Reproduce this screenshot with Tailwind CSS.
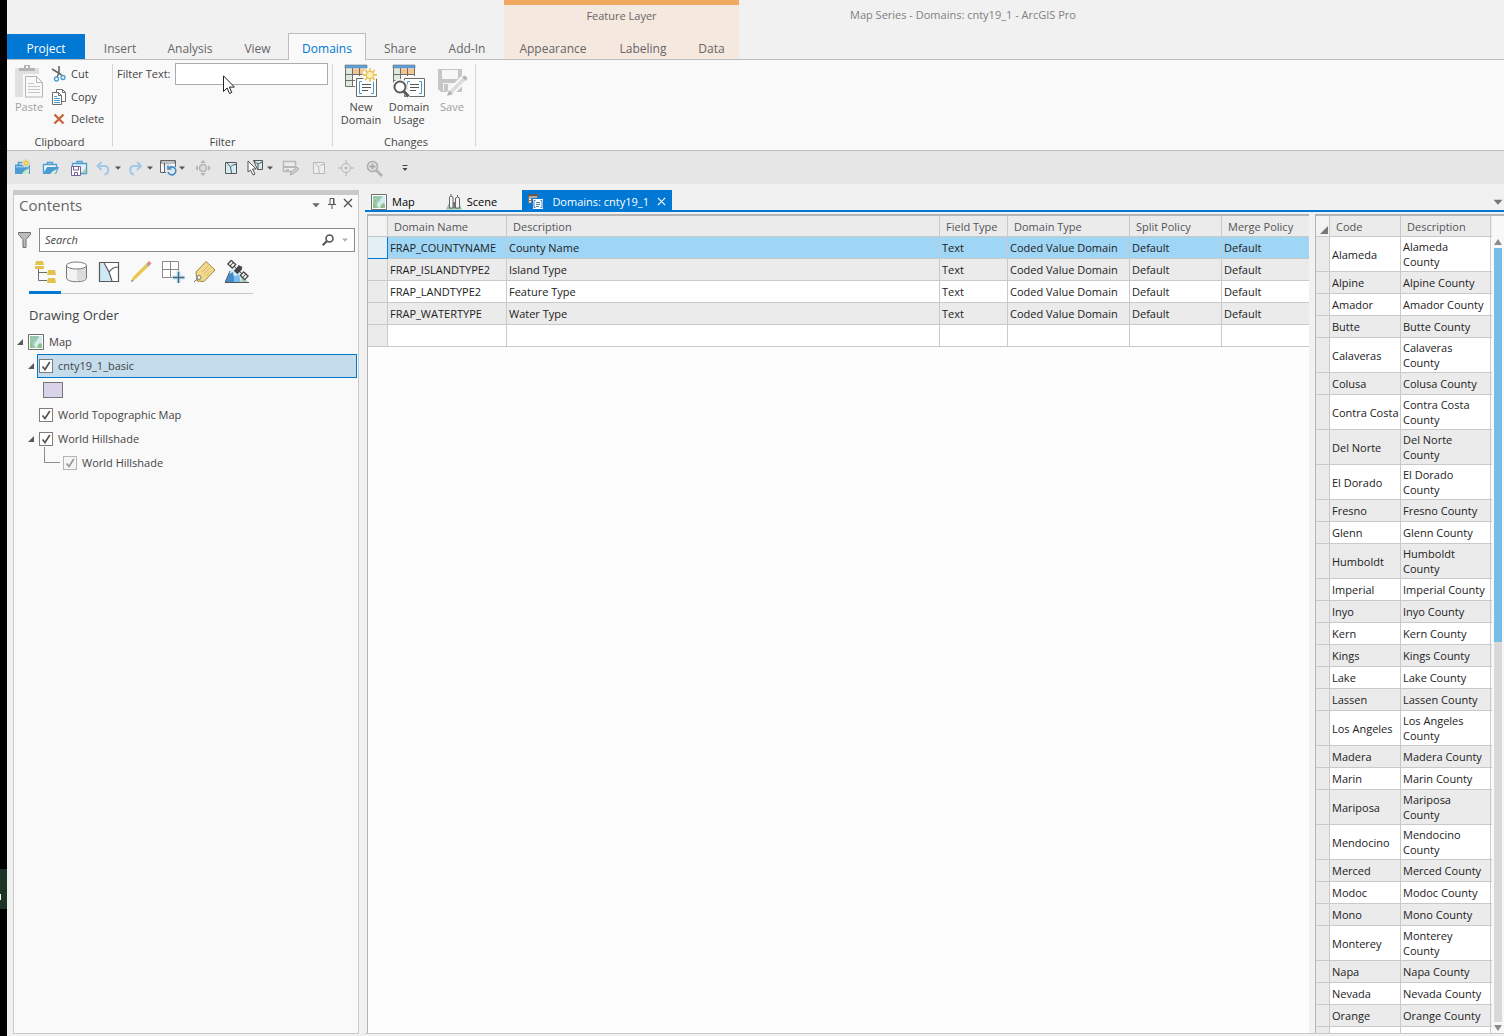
<!DOCTYPE html>
<html lang="en">
<head>
  <meta charset="UTF-8" />
  <meta name="viewport" content="width=device-width, initial-scale=1" />
  <title>Map Series - Domains: cnty19_1 - ArcGIS Pro</title>
  <script src="https://cdn.jsdelivr.net/npm/@tailwindcss/browser@4"></script>
  <style>
    body {
      font-family: 'Open Sans', 'Noto Sans', sans-serif;
    }
  </style>
</head>
<body class="relative flex h-screen overflow-hidden bg-black text-[11px] leading-4 text-[#444]">

  <!-- shared symbols -->
  <svg class="hidden">
    <symbol id="map" viewBox="0 0 16 16">
      <path d="M.5.5h15v15H.5z" fill="#fff" stroke="#6e6e6e" />
      <path d="M2 2h12v12H2z" fill="#d3ecf0" />
      <path d="M2 2h9v2l-2 1v2L7 8l-1 3 2 3H2z" fill="#9ccdaa" />
      <path d="M2 8l2 2 1 4H2zM9 14l1-3 2-2 2 1v4z" fill="#8fbf8d" />
      <path d="M3 3h1v1H3zM6 3h1v1H6zM4 6h1v1H4zM8 4h1v1H8z" fill="#7ba7d9" />
    </symbol>
    <symbol id="down" viewBox="0 0 8 8"><path d="M1 2.5h6L4 5.8z" fill="currentColor" /></symbol>
    <symbol id="expanded" viewBox="0 0 8 8"><path d="M7 1v6H1z" fill="#595959" /></symbol>
    <symbol id="check" viewBox="0 0 14 14"><path d="M3.500 7.500l2.500 3L10.800 3" fill="none" stroke="currentColor" stroke-width="1.700" /></symbol>
    <symbol id="domain" viewBox="0 0 34 34">
      <path d="M2 5h7v18H2z" fill="#dcebd9" />
      <path d="M9 5h14v6H9z" fill="#f5c78e" />
      <path d="M9 11h14v12H9z" fill="#fff" />
      <path d="M1.500 4v18.500h10M1.500 10.500h21M1.500 16.500h12M8.500 4v18M15.500 4v8M22.500 4v8" fill="none" stroke="#6e6e6e" />
      <path d="M1 1h22v3H1z" fill="#5aa3e6" stroke="#6e6e6e" stroke-width=".6" />
      <path d="M11 12h23v22H11z" fill="#f9f9f9" />
      <path d="M12.500 14.500h20v18h-20z" fill="#fff" stroke="#6a6a6a" />
      <path d="M18 17.500h-2.500v12H18M27 17.500h2.500v12H27" fill="none" stroke="#4b9cd3" />
      <path d="M18 20.500h9M18 23.500h9M18 26.500h6" stroke="#555" />
    </symbol>
  </svg>

  <!-- sliver of the desktop behind the window -->
  <div class="relative w-[7px] shrink-0 bg-black">
    <div class="absolute top-[869px] h-10 w-[7px] bg-[#1c3325]"></div>
    <div class="absolute top-[894px] h-1.5 w-px bg-white"></div>
  </div>

  <div class="flex min-w-0 flex-1 flex-col bg-[#f1f1f1]">

    <!-- title bar and tabs -->
    <header class="flex h-[60px] shrink-0 border-b border-[#bdbdbd] text-xs text-[#666]">
      <nav class="flex items-end">
        <button class="h-[25px] w-[78px] bg-[#0078d4] pt-1 text-white">Project</button>
        <button class="h-[25px] w-[70px] pt-1">Insert</button>
        <button class="h-[25px] w-[70px] pt-1">Analysis</button>
        <button class="h-[25px] w-[63px] pt-1 pl-0.5">View</button>
        <button class="-mb-px h-[27px] w-[78px] border border-b-0 border-[#bdbdbd] bg-[#f9f9f9] pt-1 text-[#0078d4]">Domains</button>
        <button class="h-[25px] w-[68px] pt-1">Share</button>
        <button class="h-[25px] w-[66px] pt-1">Add-In</button>
      </nav>
      <div class="ml-1 flex flex-col justify-between border-t-[5px] border-[#f1a961] bg-[#f5e8df]">
        <p class="pt-1 text-center text-[11px]">Feature Layer</p>
        <div class="flex">
          <button class="h-[25px] w-[98px] pt-1">Appearance</button>
          <button class="h-[25px] w-[82px] pt-1">Labeling</button>
          <button class="h-[25px] w-[55px] pt-1">Data</button>
        </div>
      </div>
      <h1 class="ml-[111px] pt-2 text-[11px] text-[#808080]">Map Series - Domains: cnty19_1 - ArcGIS Pro</h1>
    </header>

    <!-- ribbon -->
    <section class="flex h-[91px] shrink-0 border-b border-[#bdbdbd] bg-[#f9f9f9]">
      <div class="flex w-[105px] flex-col justify-between">
        <div class="flex gap-2 pl-2">
          <button class="flex flex-col items-center text-[#a0a0a0]" disabled>
            <svg class="mt-1 mb-px h-[34px] w-7" viewBox="0 0 28 34">
              <path d="M0 4h24v29H0z" fill="#e0e0e0" />
              <path d="M4 4h5V1h6v3h5v3H4z" fill="#b4b4b4" />
              <path d="M11 2h2v2h-2z" fill="#f9f9f9" />
              <path d="M8 10h16l4 4v20H8z" fill="#f9f9f9" />
              <path d="M10.500 12.500h11l6 6V33h-17z" fill="#f9f9f9" stroke="#b4b4b4" />
              <path d="M21.500 12.500v6h6" fill="none" stroke="#b4b4b4" />
              <path d="M13 19.500h6M13 22.500h12M13 25.500h12M13 28.500h12" stroke="#c6c6c6" />
            </svg>
            Paste
          </button>
          <div class="flex flex-col pt-[3px]">
            <button class="flex h-[22px] items-center gap-1">
              <svg class="h-4 w-4" viewBox="0 0 16 16">
                <path d="M8 0v7l3.500 3M1 3l9 5.500" fill="none" stroke="#666" stroke-width="1.600" />
                <path d="M8 7l-2 4" stroke="#666" stroke-width="1.500" />
                <circle cx="5.500" cy="13" r="2" fill="none" stroke="#4b9cd3" stroke-width="1.300" />
                <circle cx="12" cy="11.500" r="2" fill="none" stroke="#4b9cd3" stroke-width="1.300" />
              </svg>
              Cut
            </button>
            <button class="flex h-[23px] items-center gap-1">
              <svg class="h-4 w-4" viewBox="0 0 16 16">
                <path d="M5.500.5h6l3 3v9h-9z" fill="#fff" stroke="#6e6e6e" />
                <path d="M1.500 3.500h6l3 3v9h-9zM7.500 3.500v3h3" fill="#fff" stroke="#6e6e6e" />
                <path d="M3 7.500h3M3 9.500h6M3 11.500h6M3 13.500h6" stroke="#4b9cd3" />
                <path d="M11.500.5v3h3" fill="none" stroke="#6e6e6e" />
              </svg>
              Copy
            </button>
            <button class="flex h-[22px] items-center gap-1">
              <svg class="h-4 w-4" viewBox="0 0 16 16"><path d="M3.500 3.500l9 9M12.500 3.500l-9 9" stroke="#c8643f" stroke-width="2.400" /></svg>
              Delete
            </button>
          </div>
        </div>
        <p class="text-center">Clipboard</p>
      </div>
      <div class="my-1 w-px bg-[#d5d5d5]"></div>

      <div class="flex w-[219px] flex-col justify-between">
        <div class="flex items-center justify-between pt-[3px] pr-1 pl-1">
          <label for="filterText">Filter Text:</label>
          <input type="text" id="filterText" class="h-[22px] w-[153px] border border-[#ababab] bg-white px-1 outline-none" />
        </div>
        <p class="text-center">Filter</p>
      </div>
      <div class="my-1 w-px bg-[#d5d5d5]"></div>

      <div class="flex w-[142px] flex-col justify-between">
        <div class="flex pl-1">
          <button class="flex w-12 flex-col items-center leading-[13px]">
            <svg class="mt-1 mb-0.5 h-[34px] w-[34px]" viewBox="0 0 34 34">
              <use href="#domain" />
              <circle cx="26" cy="11" r="7.500" fill="#f9f9f9" />
              <path d="M26 4v14M19 11h14M21 6l10 10M31 6L21 16" stroke="#e3bd3c" stroke-width="1.300" />
              <circle cx="26" cy="11" r="3.800" fill="#fbeeb0" stroke="#e3bd3c" />
            </svg>
            New<br />Domain
          </button>
          <button class="flex w-12 flex-col items-center leading-[13px]">
            <svg class="mt-1 mb-0.5 h-[34px] w-[34px]" viewBox="0 0 34 34">
              <use href="#domain" />
              <circle cx="8" cy="23" r="8" fill="#f9f9f9" />
              <path d="M12 26l6 6" stroke="#f9f9f9" stroke-width="6" />
              <circle cx="8" cy="23" r="5.500" fill="#fff" stroke="#595959" stroke-width="2" />
              <path d="M11.500 27l5 5.500" stroke="#595959" stroke-width="3" />
            </svg>
            Domain<br />Usage
          </button>
          <button class="flex w-[38px] flex-col items-center leading-[13px] text-[#a0a0a0]" disabled>
            <svg class="mt-1 mb-0.5 h-[34px] w-[31px]" viewBox="0 0 31 34">
              <path d="M1 5h24v23H4l-3-3z" fill="#c6c6c6" />
              <path d="M5 6h16v9H5z" fill="#f7f7f7" />
              <path d="M6 19h14v8H6z" fill="#f4f4f4" />
              <path d="M7 20h4v8H7z" fill="#c6c6c6" />
              <path d="M10 32l2-6L26 12l4 4-14 14z" fill="#dcdcdc" stroke="#f9f9f9" stroke-width="2" />
              <path d="M10 32l2-6 4 4zM25 13l3-1.500 2.500 2.500-1.500 3z" fill="#b4b4b4" />
            </svg>
            Save
          </button>
        </div>
        <p class="pl-1 text-center">Changes</p>
      </div>
      <div class="my-1 w-px bg-[#d5d5d5]"></div>
    </section>

    <!-- quick access toolbar -->
    <section class="flex h-[33px] shrink-0 items-center bg-[#e6e6e6] pl-[7px] text-[#555]">
      <button aria-label="New project">
        <svg class="h-[18px] w-[18px]" viewBox="0 0 18 18">
          <path d="M1 5.500h15V15H1z" fill="#4b9cd3" />
          <path d="M4.500 6V3.500h5V6" fill="none" stroke="#4b9cd3" stroke-width="1.500" />
          <path d="M2 7h13v1.500H2z" fill="#8cc3e8" />
          <path d="M8 15l2-3 5-3v6z" fill="#cfe8c9" />
          <circle cx="12" cy="4" r="3.800" fill="#e6e6e6" />
          <path d="M12 0v8M8 4h8M9.300 1.300l5.400 5.400M14.700 1.300L9.300 6.700" stroke="#e3bd3c" stroke-width=".8" />
          <circle cx="12" cy="4" r="2" fill="#f7e58d" stroke="#e3bd3c" />
        </svg>
      </button>
      <button class="ml-2.5" aria-label="Open project">
        <svg class="h-[18px] w-[18px]" viewBox="0 0 18 18">
          <path d="M1.500 14.500v-9h13v3M5.500 5.500v-2h5v2" fill="#f4f9fd" stroke="#4b9cd3" stroke-width="1.300" />
          <path d="M1 15l4-7h12l-3 7z" fill="#4b9cd3" />
          <path d="M8 15l3-3 4-2-2 5z" fill="#d4ebce" />
        </svg>
      </button>
      <button class="ml-2.5" aria-label="Save project">
        <svg class="h-[18px] w-[18px]" viewBox="0 0 18 18">
          <path d="M2.500 8V4.500h14v10H11M7 4.500v-2h5v2" fill="#e4f1fa" stroke="#4b9cd3" stroke-width="1.300" />
          <path d="M12 13l4-4v5h-4z" fill="#a9d3a5" />
          <path d="M1.500 7.500h9v9h-9z" fill="#fff" stroke="#75609c" />
          <path d="M3.500 8v3h5V8M4.500 16v-2.500h3V16" fill="none" stroke="#75609c" />
        </svg>
      </button>
      <button class="ml-[7px]" aria-label="Undo">
        <svg class="h-[18px] w-[18px]" viewBox="0 0 18 18"><path d="M6.500 3L2.500 7l4 4M3 7h6.500c5 0 5 7.500 0 8.500" fill="none" stroke="#a3c8e5" stroke-width="2" /></svg>
      </button>
      <button class="ml-px" aria-label="Undo list"><svg class="h-2 w-2"><use href="#down" /></svg></button>
      <button class="ml-1" aria-label="Redo">
        <svg class="h-[18px] w-[18px]" viewBox="0 0 18 18"><path d="M11 3l4 4-4 4M14.500 7H8c-5 0-5 7.500 0 8.500" fill="none" stroke="#a3c8e5" stroke-width="2" /></svg>
      </button>
      <button class="ml-0.5" aria-label="Redo list"><svg class="h-2 w-2"><use href="#down" /></svg></button>
      <button class="ml-1.5" aria-label="Refresh view">
        <svg class="h-[18px] w-[18px]" viewBox="0 0 18 18">
          <path d="M.5 1.500h15V8M.5 1.500v12H6M4.500 4v9.500" fill="#f7fafc" stroke="#666" />
          <path d="M1 2h14v2H1z" fill="#fff" stroke="#666" stroke-width=".8" />
          <path d="M9 9a4 4 0 1 1-1 4M8 6.500v3.500h3.500" fill="none" stroke="#3f8fd0" stroke-width="1.600" />
        </svg>
      </button>
      <button aria-label="Refresh options"><svg class="h-2 w-2"><use href="#down" /></svg></button>
      <button class="ml-2" aria-label="Explore" disabled>
        <svg class="h-[18px] w-[18px]" viewBox="0 0 18 18">
          <circle cx="9" cy="9" r="3.500" fill="#dcdcdc" stroke="#b2b2b2" stroke-width="1.500" />
          <path d="M9 1l3 3H6zM9 17l3-3H6zM1 9l3-3v6zM17 9l-3-3v6z" fill="#b8b8b8" />
        </svg>
      </button>
      <button class="ml-2.5" aria-label="Select all">
        <svg class="h-[18px] w-[18px]" viewBox="0 0 18 18">
          <path d="M3.500 3.500h11v11h-11z" fill="#d4ecf5" stroke="#555" />
          <path d="M5 4l3.500 4 1 6M14 5.500c-3 0-4 1-5.500 2.500" fill="none" stroke="#555" />
        </svg>
      </button>
      <button class="ml-[7px]" aria-label="Select features">
        <svg class="h-[18px] w-[18px]" viewBox="0 0 18 18">
          <path d="M6.500 1.500h9v9h-5z" fill="#d4ecf5" stroke="#555" />
          <path d="M7 2l4 3v5M15 3l-4 2" fill="none" stroke="#555" />
          <path d="M1 2v11l2.500-2 2.500 5 2-1-2.500-5H9z" fill="#fff" stroke="#555" />
        </svg>
      </button>
      <button class="ml-px" aria-label="Select options"><svg class="h-2 w-2"><use href="#down" /></svg></button>
      <button class="ml-2" aria-label="Save edits" disabled>
        <svg class="h-[18px] w-[18px]" viewBox="0 0 18 18">
          <path d="M1.500 2.500h12v10h-12z" fill="#ececec" stroke="#b8b8b8" stroke-width="1.500" />
          <path d="M2 7h11v2H2zM4 10h3v3H4z" fill="#b8b8b8" />
          <path d="M8 16l1-3 6-5 2 2-6 5z" fill="#ccc" stroke="#b0b0b0" />
        </svg>
      </button>
      <button class="ml-2.5" aria-label="Clear selection" disabled>
        <svg class="h-[18px] w-[18px]" viewBox="0 0 18 18">
          <path d="M3.500 3.500h11v11h-11z" fill="#ededed" stroke="#b8b8b8" />
          <path d="M5 4l3.500 4 1 6M14 5.500c-3 0-4 1-5.500 2.500" fill="none" stroke="#b8b8b8" />
        </svg>
      </button>
      <button class="ml-[9px]" aria-label="Locate" disabled>
        <svg class="h-[18px] w-[18px]" viewBox="0 0 18 18">
          <circle cx="9" cy="9" r="4.500" fill="none" stroke="#b4b4b4" />
          <circle cx="9" cy="9" r="1.500" fill="#b4b4b4" />
          <path d="M9 1v3M9 14v3M1 9h3M14 9h3" stroke="#b4b4b4" />
        </svg>
      </button>
      <button class="ml-2.5" aria-label="Zoom in" disabled>
        <svg class="h-[18px] w-[18px]" viewBox="0 0 18 18">
          <circle cx="7.500" cy="7.500" r="5" fill="none" stroke="#b0b0b0" stroke-width="1.700" />
          <path d="M11 11l6 6" stroke="#b0b0b0" stroke-width="2.500" />
          <path d="M7.500 4.500v6M4.500 7.500h6" stroke="#a8a8a8" stroke-width="1.800" />
        </svg>
      </button>
      <button class="ml-[18px]" aria-label="Customize toolbar">
        <svg class="h-2 w-2" viewBox="0 0 8 8"><path d="M1.500 1h5v1h-5zM1.500 4h5L4 7z" fill="#444" /></svg>
      </button>
    </section>

    <main class="flex min-h-0 flex-1 pt-1.5 pb-0.5 pl-1.5">

      <!-- contents pane -->
      <aside class="mr-1.5 flex w-[346px] shrink-0 flex-col border border-t-[5px] border-[#c9c9c9] bg-[#f9f9f9]">
        <div class="flex h-5 items-center pr-[5px] pl-[5px] text-[#666]">
          <h2 class="flex-1 text-[15px]">Contents</h2>
          <div class="flex items-center gap-[7px]">
            <button aria-label="Pane options"><svg class="h-2.5 w-2.5"><use href="#down" /></svg></button>
            <button aria-label="Auto hide">
              <svg class="-mt-1 h-3 w-2" viewBox="0 0 8 12"><path d="M2 7V1.500h4V7M0 7.500h8M4 8v4M5.500 1v6" fill="none" stroke="#555" /></svg>
            </button>
            <button aria-label="Close pane">
              <svg class="-mt-1 h-2.5 w-2.5" viewBox="0 0 10 10"><path d="M1 1l8 8M9 1L1 9" stroke="#555" stroke-width="1.400" /></svg>
            </button>
          </div>
        </div>

        <div class="mt-[13px] flex h-6 items-center pr-[3px] pl-1">
          <button aria-label="Filter">
            <svg class="h-4 w-[13px]" viewBox="0 0 13 16"><path d="M.5.5h12v2l-4.500 5V15.500H5V7.500L.5 2.500z" fill="#bcbcbc" stroke="#6e6e6e" /></svg>
          </button>
          <div class="ml-2 flex h-6 flex-1 items-center border border-[#8a8a8a] bg-white px-[5px]">
            <input type="text" aria-label="Search" placeholder="Search" class="min-w-0 flex-1 italic outline-none placeholder:text-[#444]" />
            <button aria-label="Run search">
              <svg class="h-3 w-3" viewBox="0 0 12 12"><circle cx="7.500" cy="4.500" r="3.500" fill="none" stroke="#555" stroke-width="1.600" /><path d="M5 7L.7 11.300" stroke="#555" stroke-width="2" /></svg>
            </button>
            <button class="ml-[7px] text-[#b0b0b0]" aria-label="Search options"><svg class="h-2 w-2"><use href="#down" /></svg></button>
          </div>
        </div>

        <div class="ml-[15px] flex w-56 border-b border-[#c6c6c6] pt-2">
          <button class="-mb-px flex h-[34px] w-8 justify-center border-b-[3px] border-[#0078d4]" aria-label="List by drawing order">
            <svg class="h-6 w-6" viewBox="0 0 24 24">
              <path d="M3 1h7l1 4H2zM2 6h9v3H2zM15 10h7l1 5h-9zM15 18h7l1 5h-9z" fill="#e3c24d" />
              <path d="M5.500 9v11.500H14M5.500 12.500H14" fill="none" stroke="#6e6e6e" />
            </svg>
          </button>
          <button class="flex w-8 justify-center" aria-label="List by data source">
            <svg class="h-6 w-6" viewBox="0 0 24 24">
              <path d="M1.500 5v13c0 5 20 5 20 0V5" fill="#f3f3f3" stroke="#7a7a7a" />
              <path d="M12 9l9-2v12l-9 2.500z" fill="#dcdcdc" />
              <ellipse cx="11.500" cy="5.500" rx="10" ry="3.500" fill="#fff" stroke="#7a7a7a" />
            </svg>
          </button>
          <button class="flex w-8 justify-center" aria-label="List by selection">
            <svg class="h-6 w-6" viewBox="0 0 24 24">
              <path d="M2.500 2.500h19v19h-19z" fill="#fff" />
              <path d="M3 3h3l6 9 3 9H3z" fill="#cfe9f5" />
              <path d="M2.500 2.500h19v19h-19zM7 3l5 9 3 9M21 7c-5 0-7 2-9 5" fill="none" stroke="#595959" stroke-width="1.200" />
            </svg>
          </button>
          <button class="flex w-8 justify-center" aria-label="List by editing">
            <svg class="h-6 w-6" viewBox="0 0 24 24">
              <path d="M2 22l2-5L17 4l2.500 2.500L6.500 19z" fill="#e8c84f" />
              <path d="M2 22l1-2.500 1.500 1.500z" fill="#777" />
              <path d="M18 3l2-2 2.500 2.500-2 2z" fill="#d58b78" />
              <path d="M17 4l2.500 2.500 1-1L18 3z" fill="#999" />
            </svg>
          </button>
          <button class="flex w-8 justify-center" aria-label="List by snapping">
            <svg class="h-6 w-6" viewBox="0 0 24 24">
              <path d="M1.500 1.500h16v16h-16zM9.500 1.500v16M1.500 9.500h16" fill="#fff" stroke="#8a8a8a" />
              <path d="M17.500 11v12M11.500 17.500h12" stroke="#bfe1f3" stroke-width="4" />
              <path d="M17.500 12v11M12 17.500h11.500" stroke="#47687c" stroke-width="1.400" />
            </svg>
          </button>
          <button class="flex w-8 justify-center" aria-label="List by labeling">
            <svg class="h-6 w-6" viewBox="0 0 24 24">
              <path d="M3 12L13 1.500l9 8.500-11 11.500-7-.5z" fill="#f1d88c" stroke="#a0863c" />
              <path d="M9 12l6-6M11 14l6-6M13 16l5-5" stroke="#d8bd75" />
              <circle cx="6" cy="17.500" r="2" fill="#fff" stroke="#777" />
              <path d="M5 18l-4 4" stroke="#777" />
            </svg>
          </button>
          <button class="flex w-8 justify-center" aria-label="List by perspective imagery">
            <svg class="h-6 w-6" viewBox="0 0 24 24">
              <path d="M6 9h6l12 14H0z" fill="#d4ecf5" />
              <path d="M4 14l4-2 2 11H0z" fill="#3f8fd0" />
              <path d="M9 16l5-1 2 8H9z" fill="#7dbbe8" />
              <path d="M16 16l8 7h-7z" fill="#a9cfa5" />
              <path d="M0 22.500h24M5 11L0 22.500" fill="none" stroke="#555" />
              <g transform="rotate(43 13 10)">
                <path d="M1.500 7.500h6v5h-6zM18.500 7.500h6v5h-6z" fill="#fff" stroke="#444" stroke-width="1.300" />
                <path d="M4.500 7.500v5M21.500 7.500v5M7.500 10h11" stroke="#444" />
                <path d="M10.500 6.500h5v7h-5z" fill="#444" />
              </g>
              <path d="M13 6l4 2" stroke="#444" stroke-width="2" />
            </svg>
          </button>
        </div>

        <h3 class="mt-[11px] pl-[15px] text-[13px] leading-5">Drawing Order</h3>

        <ul class="mt-[5px]">
          <li class="flex h-6 items-center pl-0.5">
            <svg class="h-2 w-2"><use href="#expanded" /></svg>
            <svg class="ml-1 h-4 w-4"><use href="#map" /></svg>
            <span class="ml-[5px]">Map</span>
          </li>
          <li class="flex h-6 items-center pr-px pl-[13px]">
            <svg class="h-2 w-2"><use href="#expanded" /></svg>
            <div class="ml-0.5 flex h-6 flex-1 items-center gap-[5px] border border-[#0078c8] bg-[#c5dcec] pl-px">
              <span class="grid">
                <input type="checkbox" id="cnty" checked class="col-start-1 row-start-1 h-[14px] w-[14px] appearance-none border border-[#7d7d7d] bg-white" />
                <svg class="pointer-events-none col-start-1 row-start-1 h-[14px] w-[14px] text-[#555]"><use href="#check" /></svg>
              </span>
              <label for="cnty">cnty19_1_basic</label>
            </div>
          </li>
          <li class="flex h-6 items-center pl-[29px]">
            <span class="h-4 w-5 border border-[#777] bg-[#d8d3e8]"></span>
          </li>
          <li class="flex h-[25px] items-center gap-[5px] pl-[25px]">
            <span class="grid">
              <input type="checkbox" id="topo" checked class="col-start-1 row-start-1 h-[14px] w-[14px] appearance-none border border-[#7d7d7d] bg-white" />
              <svg class="pointer-events-none col-start-1 row-start-1 h-[14px] w-[14px] text-[#555]"><use href="#check" /></svg>
            </span>
            <label for="topo">World Topographic Map</label>
          </li>
          <li>
            <div class="flex h-6 items-center pl-[13px]">
              <svg class="h-2 w-2"><use href="#expanded" /></svg>
              <span class="ml-1 grid">
                <input type="checkbox" id="hillshade" checked class="col-start-1 row-start-1 h-[14px] w-[14px] appearance-none border border-[#7d7d7d] bg-white" />
                <svg class="pointer-events-none col-start-1 row-start-1 h-[14px] w-[14px] text-[#555]"><use href="#check" /></svg>
              </span>
              <label for="hillshade" class="ml-[5px]">World Hillshade</label>
            </div>
            <div class="flex h-6 items-center pl-[30px]">
              <span class="mb-3 h-4 w-4 self-end border-b border-l border-[#8c8c8c]"></span>
              <span class="ml-[3px] grid">
                <input type="checkbox" id="hillshadeLayer" checked disabled class="col-start-1 row-start-1 h-[14px] w-[14px] appearance-none border border-[#b5b5b5] bg-[#f4f4f4]" />
                <svg class="pointer-events-none col-start-1 row-start-1 h-[14px] w-[14px] text-[#999]"><use href="#check" /></svg>
              </span>
              <label for="hillshadeLayer" class="ml-[5px]">World Hillshade</label>
            </div>
          </li>
        </ul>
      </aside>

      <!-- document views -->
      <section class="flex min-w-0 flex-1 flex-col">
        <div class="flex h-[22px] items-center border-b-2 border-[#0078d4] text-black">
          <button class="flex items-center gap-[5px] pt-[3px] pl-1.5">
            <svg class="h-4 w-4"><use href="#map" /></svg>
            Map
          </button>
          <button class="ml-[31px] flex items-center gap-[5px] pt-[3px]">
            <svg class="h-4 w-4" viewBox="0 0 16 16">
              <path d="M3 9L0 15.500h16L13 9z" fill="#8fc79a" />
              <path d="M3.500 14V3l1.500-1 2 1v11zM9.500 14V4l2-1 2 1v10zM5 2V0M11.500 3V1" fill="#f4f4f4" stroke="#666" />
              <path d="M7 8h2v6H7z" fill="#777" />
            </svg>
            Scene
          </button>
          <div class="ml-[25px] flex h-full w-[150px] items-center justify-between bg-[#0078d4] px-1.5 pt-[3px] text-white">
            <svg class="h-4 w-4" viewBox="0 0 16 16">
              <path d="M.5 1h9v8h-9zM.5 4h9M.5 6.500h9M3.500 4v5" fill="#f0f0f0" stroke="#777" />
              <path d="M0 0h10v2.500H0z" fill="#6a5a4c" />
              <path d="M4.500 4.500h11v11h-11z" fill="#fff" stroke="#0078d4" />
              <path d="M7.500 6.500H6v7h1.500M12.500 6.500H14v7h-1.500M8 8.500h4M8 10.500h4M8 12.500h3" fill="none" stroke="#4b7fb0" />
            </svg>
            <span>Domains: cnty19_1</span>
            <button aria-label="Close Domains"><svg class="h-[9px] w-[9px]" viewBox="0 0 10 10"><path d="M1 1l8 8M9 1L1 9" stroke="#fff" stroke-width="1.300" /></svg></button>
          </div>
          <button class="mt-1 ml-auto text-[#777]" aria-label="View list"><svg class="h-3 w-3"><use href="#down" /></svg></button>
        </div>

        <div class="flex min-h-0 flex-1 border-b border-[#c9c9c9] pt-0.5 pl-0.5">

          <!-- domains -->
          <div class="min-w-0 flex-1 overflow-hidden border-t-2 border-l border-[#b4b4b4] bg-[#fdfdfd]">
            <table class="w-full table-fixed border-separate border-spacing-0 leading-[15px] whitespace-nowrap text-[#222]">
              <colgroup>
                <col class="w-5" />
                <col class="w-[119px]" />
                <col />
                <col class="w-[68px]" />
                <col class="w-[122px]" />
                <col class="w-[92px]" />
                <col class="w-[87px]" />
              </colgroup>
              <thead>
                <tr class="h-[21px] bg-[#ebebeb] text-left text-[#555]">
                  <td class="border-r border-b border-[#c9c9c9] bg-[#f3f3f3]"></td>
                  <th class="border-r border-b border-[#c9c9c9] px-1.5 font-normal">Domain Name</th>
                  <th class="border-r border-b border-[#c9c9c9] px-1.5 font-normal">Description</th>
                  <th class="border-r border-b border-[#c9c9c9] px-1.5 font-normal">Field Type</th>
                  <th class="border-r border-b border-[#c9c9c9] px-1.5 font-normal">Domain Type</th>
                  <th class="border-r border-b border-[#c9c9c9] px-1.5 font-normal">Split Policy</th>
                  <th class="border-b border-[#c9c9c9] px-1.5 font-normal">Merge Policy</th>
                </tr>
              </thead>
              <tbody id="domainRows"></tbody>
            </table>
          </div>

          <!-- coded values -->
          <div class="ml-1.5 flex w-[189px] shrink-0 border-t-2 border-l border-[#b4b4b4] bg-[#fdfdfd]">
            <div class="w-44 overflow-hidden">
              <table class="w-44 table-fixed border-separate border-spacing-0 leading-[15px] text-[#222]">
                <colgroup>
                  <col class="w-3.5" />
                  <col class="w-[71px]" />
                  <col class="w-[90px]" />
                  <col class="w-px" />
                </colgroup>
                <thead>
                  <tr class="h-[21px] bg-[#ebebeb] text-left text-[#555]">
                    <td class="border-r border-b border-[#c9c9c9] bg-[#f3f3f3]">
                      <svg class="mt-2 ml-1 h-2.5 w-2" viewBox="0 0 8 10"><path d="M8 1v8H0z" fill="#777" /></svg>
                    </td>
                    <th class="border-r border-b border-[#c9c9c9] px-1.5 font-normal">Code</th>
                    <th class="border-r border-b border-[#c9c9c9] px-1.5 font-normal">Description</th>
                    <td class="border-b border-[#c9c9c9]"></td>
                  </tr>
                </thead>
                <tbody id="codeRows"></tbody>
              </table>
            </div>
            <div class="flex flex-1 flex-col items-center bg-[#f8f8f8] pt-[22px] pb-px">
              <svg class="h-2.5 w-2.5" viewBox="0 0 10 10"><path d="M1 7h8L5 1z" fill="#8a8a8a" /></svg>
              <div class="w-2 flex-[394] bg-[#76bdea]"></div>
              <div class="w-2 flex-[380] bg-[#d9d9d9]"></div>
              <svg class="h-2.5 w-2.5" viewBox="0 0 10 10"><path d="M1 3h8L5 9z" fill="#8a8a8a" /></svg>
            </div>
          </div>
        </div>
      </section>
    </main>
  </div>

  <!-- mouse pointer -->
  <svg class="pointer-events-none absolute top-[75px] left-[223px] h-5 w-3" viewBox="0 0 12 20">
    <path d="M.5.800v15.700l3.600-3.500 2.400 5.500 2.300-1-2.400-5.400h5z" fill="#fff" stroke="#222" />
  </svg>

  <script>
    const domains = [
      ['FRAP_COUNTYNAME', 'County Name'],
      ['FRAP_ISLANDTYPE2', 'Island Type'],
      ['FRAP_LANDTYPE2', 'Feature Type'],
      ['FRAP_WATERTYPE', 'Water Type'],
    ];

    const counties = [
      'Alameda', 'Alpine', 'Amador', 'Butte', 'Calaveras', 'Colusa', 'Contra Costa', 'Del Norte',
      'El Dorado', 'Fresno', 'Glenn', 'Humboldt', 'Imperial', 'Inyo', 'Kern', 'Kings', 'Lake',
      'Lassen', 'Los Angeles', 'Madera', 'Marin', 'Mariposa', 'Mendocino', 'Merced', 'Modoc',
      'Mono', 'Monterey', 'Napa', 'Nevada', 'Orange',
    ];

    // descriptions that take two lines
    const wrapped = ['Alameda', 'Calaveras', 'Contra Costa', 'Del Norte', 'El Dorado', 'Humboldt',
      'Los Angeles', 'Mariposa', 'Mendocino', 'Monterey'];

    const cell = 'border-r border-b border-[#c9c9c9] px-0.5';

    domains.forEach(([name, description], i) => {
      const bg = i === 0 ? 'bg-[#9fd5f5]' : i % 2 ? 'bg-[#ebebeb]' : 'bg-white';
      const head = i === 0
        ? 'border-r border-b border-[#0078d4] bg-[#e3eef5]'
        : 'border-r border-b border-[#c9c9c9] bg-[#ebebeb]';
      document.getElementById('domainRows').innerHTML += `
        <tr class="h-[22px] ${bg}">
          <td class="${head}"></td>
          <td class="${cell}">${name}</td>
          <td class="${cell}">${description}</td>
          <td class="${cell}">Text</td>
          <td class="${cell}">Coded Value Domain</td>
          <td class="${cell}">Default</td>
          <td class="border-b border-[#c9c9c9] px-0.5">Default</td>
        </tr>`;
    });

    // empty row for a new domain
    document.getElementById('domainRows').innerHTML += `
      <tr class="h-[22px] bg-white">
        <td class="border-r border-b border-[#c9c9c9] bg-[#ebebeb]"></td>
        ${`<td class="${cell}"></td>`.repeat(5)}
        <td class="border-b border-[#c9c9c9]"></td>
      </tr>`;

    document.getElementById('codeRows').innerHTML = counties.map((name, i) => `
      <tr class="h-[22px] ${i % 2 ? 'bg-[#ebebeb]' : 'bg-white'}">
        <td class="border-r border-b border-[#c9c9c9] bg-[#ebebeb]"></td>
        <td class="${cell} overflow-hidden whitespace-nowrap">${name}</td>
        <td class="${cell} py-0.5 whitespace-nowrap">${name}${wrapped.includes(name) ? '<br />' : ' '}County</td>
        <td class="border-b border-[#c9c9c9]"></td>
      </tr>`).join('') + `
      <tr class="h-[22px] bg-white">
        <td class="border-r border-b border-[#c9c9c9] bg-[#ebebeb]"></td>
        ${`<td class="${cell}"></td>`.repeat(2)}
        <td class="border-b border-[#c9c9c9]"></td>
      </tr>`;
  </script>

</body>
</html>
